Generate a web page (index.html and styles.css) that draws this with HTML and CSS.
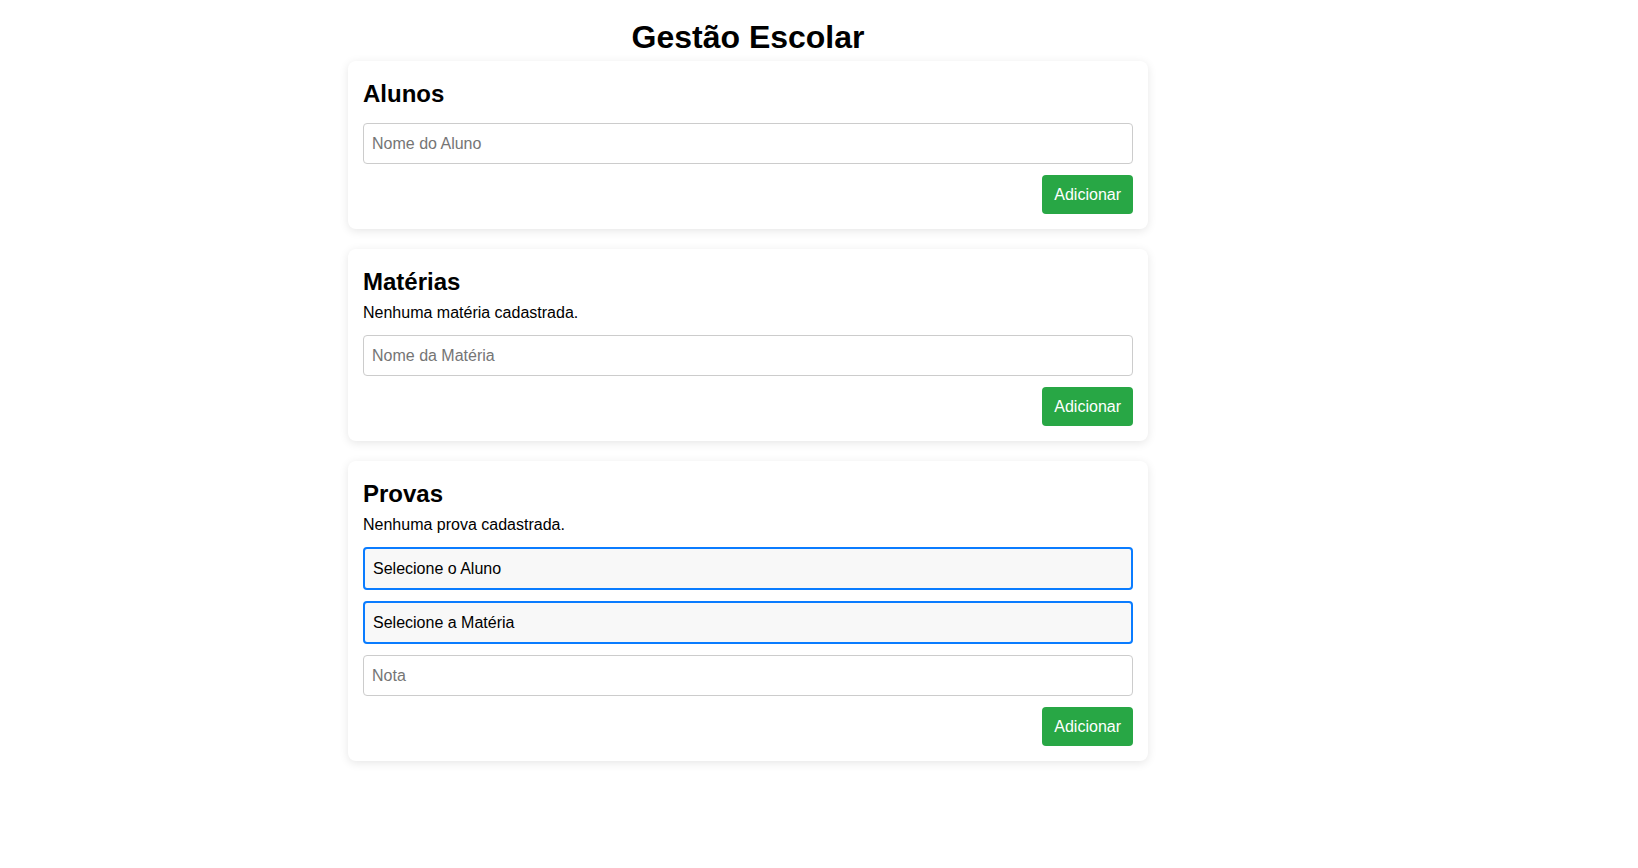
FILE: index.html
```html
<!DOCTYPE html>
<html lang="pt-BR">
<head>
<meta charset="utf-8">
<title>Gestão Escolar</title>
<link rel="stylesheet" href="styles.css">
</head>
<body>
<div class="page">
  <div class="container">
    <h1 class="page-title">Gestão Escolar</h1>

    <section class="card">
      <h2 class="card-title">Alunos</h2>
      <div class="form">
        <input class="field" type="text" placeholder="Nome do Aluno">
        <button class="btn" type="button">Adicionar</button>
      </div>
    </section>

    <section class="card">
      <h2 class="card-title">Matérias</h2>
      <p class="empty">Nenhuma matéria cadastrada.</p>
      <div class="form">
        <input class="field" type="text" placeholder="Nome da Matéria">
        <button class="btn" type="button">Adicionar</button>
      </div>
    </section>

    <section class="card">
      <h2 class="card-title">Provas</h2>
      <p class="empty">Nenhuma prova cadastrada.</p>
      <div class="form">
        <select class="select">
          <option>Selecione o Aluno</option>
        </select>
        <select class="select">
          <option>Selecione a Matéria</option>
        </select>
        <input class="field" type="text" placeholder="Nota">
        <button class="btn" type="button">Adicionar</button>
      </div>
    </section>
  </div>
</div>
</body>
</html>
```

FILE: styles.css
```css
* {
  box-sizing: border-box;
}

html, body {
  margin: 0;
  padding: 0;
  background: #ffffff;
}

body {
  font-family: "Liberation Sans", Arial, sans-serif;
  color: #000;
}

.page {
  width: 1496px;
}

.container {
  width: 800px;
  margin: 0 auto;
}

.page-title {
  margin: 19px 0 5px;
  font-size: 32px;
  line-height: 37px;
  font-weight: bold;
  text-align: center;
}

.card {
  background: #fff;
  border-radius: 8px;
  box-shadow: 0 2px 10px rgba(0, 0, 0, 0.1);
  padding: 19px 15px 15px;
  margin-bottom: 20px;
}

.card-title {
  margin: 0 0 7px;
  font-size: 24px;
  line-height: 28px;
  font-weight: bold;
}

.empty {
  margin: 0 0 13px;
  font-size: 16px;
  line-height: 19px;
}

.card-title + .form {
  margin-top: 15px;
}

.form {
  display: flex;
  flex-direction: column;
  gap: 11px;
}

.field {
  display: block;
  width: 100%;
  height: 41px;
  font-family: inherit;
  font-size: 16px;
  line-height: 19px;
  padding: 10px 8px;
  border: 1px solid #ccc;
  border-radius: 4px;
  color: #000;
  background: #fff;
  outline: none;
}

.field::placeholder {
  color: #757575;
}

.select {
  display: block;
  width: 100%;
  height: 43px;
  font-family: inherit;
  font-size: 16px;
  line-height: 19px;
  padding: 10px 8px;
  border: 2px solid #0a7cff;
  border-radius: 4px;
  color: #000;
  background: #f8f8f8;
  appearance: none;
  -webkit-appearance: none;
  outline: none;
}

.btn {
  align-self: flex-end;
  height: 39px;
  font-family: inherit;
  font-size: 16px;
  line-height: 19px;
  padding: 10px 12px;
  border: none;
  border-radius: 4px;
  background: #28a745;
  color: #fff;
  cursor: pointer;
}
```
